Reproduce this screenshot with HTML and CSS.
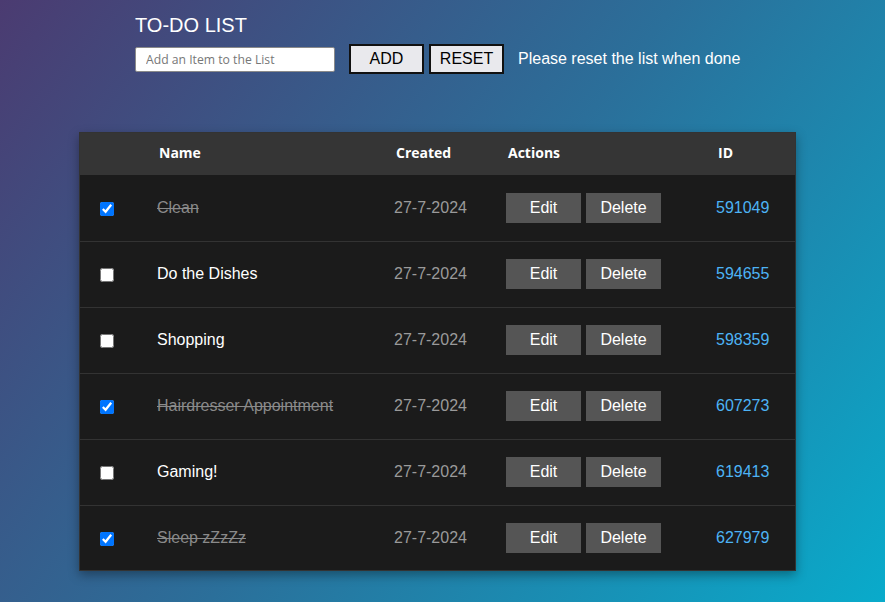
FILE: index.html
```html
<!DOCTYPE html>
<html>
<head>
<meta charset="utf-8">
<title>To-Do List</title>
<link rel="stylesheet" href="styles.css">
</head>
<body>
<div class="page">
  <header class="top">
    <h1 class="title">TO-DO LIST</h1>
    <div class="controls">
      <input class="item-input" type="text" placeholder="Add an Item to the List">
      <button class="ctl-btn add-btn">ADD</button>
      <button class="ctl-btn">RESET</button>
      <span class="note">Please reset the list when done</span>
    </div>
  </header>
  <table class="todo">
    <colgroup>
      <col class="c-check"><col class="c-name"><col class="c-created"><col class="c-actions"><col class="c-id">
    </colgroup>
    <thead>
      <tr><th></th><th>Name</th><th>Created</th><th>Actions</th><th>ID</th></tr>
    </thead>
    <tbody>
      <tr>
        <td><input type="checkbox" class="chk" checked></td>
        <td class="name done">Clean</td>
        <td class="date">27-7-2024</td>
        <td><div class="actions"><button class="act">Edit</button><button class="act">Delete</button></div></td>
        <td class="id">591049</td>
      </tr>
      <tr>
        <td><input type="checkbox" class="chk"></td>
        <td class="name">Do the Dishes</td>
        <td class="date">27-7-2024</td>
        <td><div class="actions"><button class="act">Edit</button><button class="act">Delete</button></div></td>
        <td class="id">594655</td>
      </tr>
      <tr>
        <td><input type="checkbox" class="chk"></td>
        <td class="name">Shopping</td>
        <td class="date">27-7-2024</td>
        <td><div class="actions"><button class="act">Edit</button><button class="act">Delete</button></div></td>
        <td class="id">598359</td>
      </tr>
      <tr>
        <td><input type="checkbox" class="chk" checked></td>
        <td class="name done">Hairdresser Appointment</td>
        <td class="date">27-7-2024</td>
        <td><div class="actions"><button class="act">Edit</button><button class="act">Delete</button></div></td>
        <td class="id">607273</td>
      </tr>
      <tr>
        <td><input type="checkbox" class="chk"></td>
        <td class="name">Gaming!</td>
        <td class="date">27-7-2024</td>
        <td><div class="actions"><button class="act">Edit</button><button class="act">Delete</button></div></td>
        <td class="id">619413</td>
      </tr>
      <tr>
        <td><input type="checkbox" class="chk" checked></td>
        <td class="name done">Sleep zZzZz</td>
        <td class="date">27-7-2024</td>
        <td><div class="actions"><button class="act">Edit</button><button class="act">Delete</button></div></td>
        <td class="id">627979</td>
      </tr>
    </tbody>
  </table>
</div>
</body>
</html>
```
FILE: styles.css
```css
html, body {
  margin: 0;
  padding: 0;
  height: 100%;
}
body {
  font-family: "Liberation Sans", Arial, sans-serif;
  color: #fff;
  background: linear-gradient(128deg, #4b3b71 0%, #2b6f9a 50%, #09abcb 100%);
  background-attachment: fixed;
  min-height: 602px;
}
.page {
  padding-top: 14px;
}
.top {
  padding-left: 135px;
}
.title {
  margin: 0;
  font-size: 20px;
  font-weight: normal;
  line-height: 23px;
}
.controls {
  display: flex;
  align-items: center;
  margin-top: 7px;
  height: 30px;
}
.item-input {
  box-sizing: border-box;
  width: 200px;
  height: 25px;
  margin: 0;
  padding: 0 10px;
  border: 1px solid #8a8a8a;
  border-radius: 2px;
  background: #fff;
  font-family: "Open Sans", "Noto Sans", sans-serif;
  font-size: 12.2px;
  color: #333;
}
.item-input::placeholder {
  color: #777;
}
.ctl-btn {
  box-sizing: border-box;
  width: 75px;
  height: 30px;
  margin: 0 5px 0 0;
  padding: 0;
  background: #e9e9ed;
  border: 2px solid #111;
  font-family: "Liberation Sans", Arial, sans-serif;
  font-size: 16px;
  color: #000;
}
.add-btn {
  margin-left: 14px;
}
.note {
  margin-left: 9px;
  font-size: 16px;
}
.todo {
  margin: 58px 0 0 79px;
  width: 717px;
  table-layout: fixed;
  border-collapse: collapse;
  background: #1b1b1b;
  box-shadow: 0 4px 10px rgba(0, 0, 0, 0.35);
  outline: 1px solid #333;
  outline-offset: -1px;
}
.c-check { width: 62px; }
.c-name { width: 237px; }
.c-created { width: 112px; }
.c-actions { width: 210px; }
.c-id { width: 96px; }
.todo thead tr {
  background: #353535;
  height: 43px;
}
.todo th {
  text-align: left;
  font-family: "Open Sans", "Liberation Sans", sans-serif;
  font-size: 14px;
  font-weight: bold;
  padding: 0 0 2px 18px;
  color: #fff;
}
.todo tbody tr {
  height: 66px;
  border-top: 1px solid #333;
}
.todo tbody tr:first-child {
  border-top: none;
}
.todo td {
  padding: 0 0 0 16px;
  font-size: 16px;
  vertical-align: middle;
}
.chk {
  width: 14px;
  height: 14px;
  margin: 0 0 0 5px;
  vertical-align: middle;
}
.name {
  color: #fff;
}
.name.done {
  color: #8a8a8a;
  text-decoration: line-through;
}
.date {
  color: #9a9a9a;
}
.actions {
  display: flex;
  gap: 5px;
}
.act {
  width: 75px;
  height: 30px;
  margin: 0;
  padding: 0;
  border: none;
  background: #555;
  color: #fff;
  font-family: "Liberation Sans", Arial, sans-serif;
  font-size: 16px;
}
.id {
  color: #4db3f5;
}
```
